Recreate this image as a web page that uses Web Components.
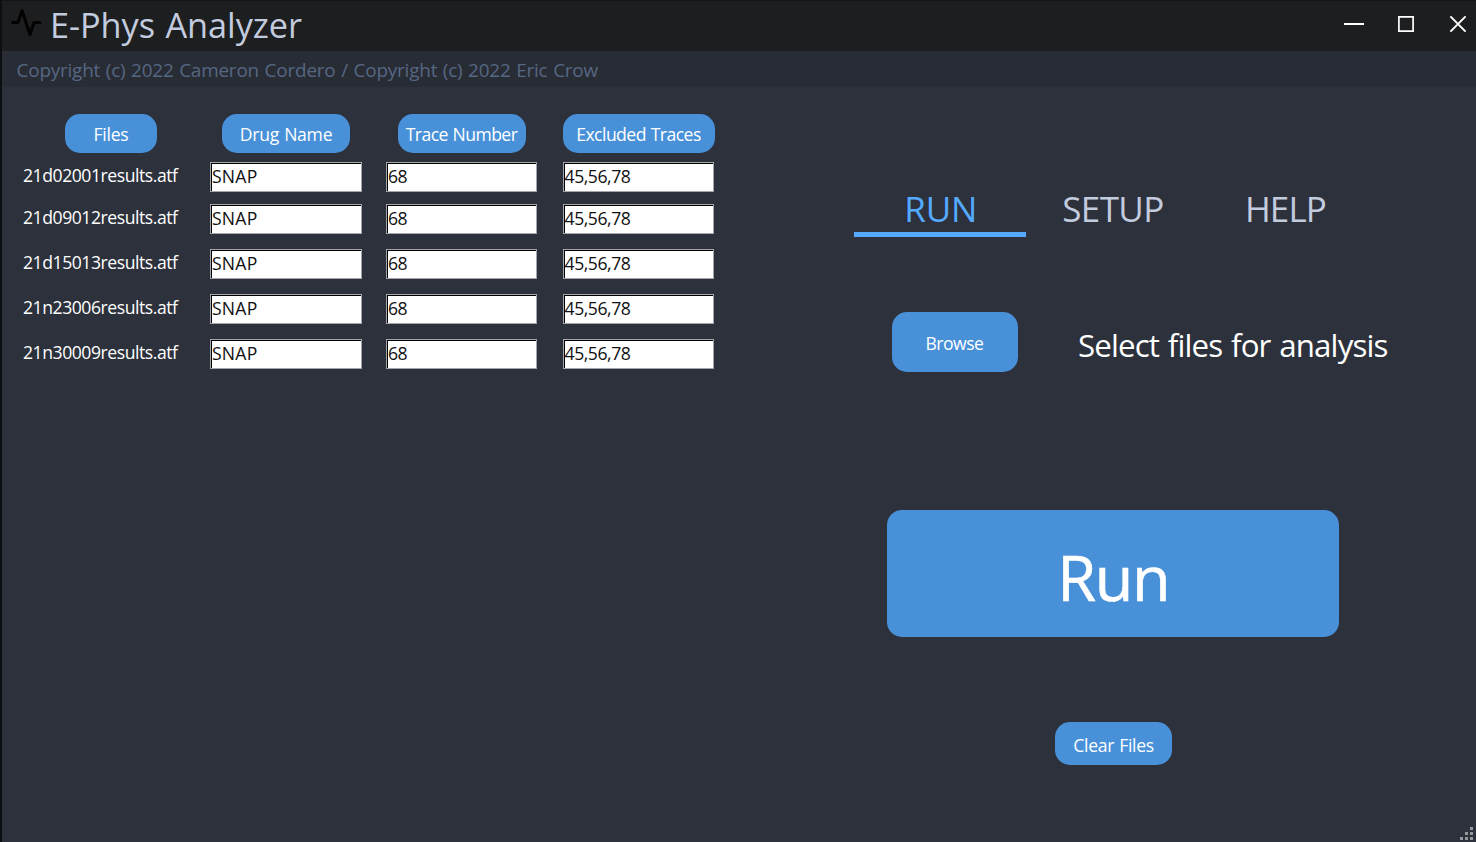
<!DOCTYPE html>
<html lang="en">
<head>
<meta charset="utf-8">
<title>E-Phys Analyzer</title>
<style>
html,body{margin:0;height:100%;overflow:hidden;background:#2c313c}
body{font-family:"Open Sans","Noto Sans",sans-serif;color:#fff}
</style>
</head>
<body>
<ephys-app></ephys-app>
<script>
const define=(name,html,init)=>customElements.define(name,class extends HTMLElement{
  connectedCallback(){
    if(this.shadowRoot)return;
    const t=document.createElement('template');
    t.innerHTML=html;
    this.attachShadow({mode:'open'}).append(t.content.cloneNode(true));
    if(init)init(this,this.shadowRoot);
  }
});

/* A single line of text tracked to a given width. */
define('fit-text',`<style>
:host{display:block;white-space:nowrap;flex:none}
span{display:inline-block;word-spacing:.05em}
</style><span><slot></slot></span>`,(el,root)=>{
  const s=root.querySelector('span'),w=parseFloat(el.getAttribute('w'));
  const n=el.textContent.length;
  s.style.fontSize=el.getAttribute('size')+'px';
  s.style.lineHeight=el.getAttribute('lh')+'px';
  s.style.fontKerning='normal';
  s.style.fontVariantLigatures='none';
  el.style.width=w+'px';
  el.style.height=el.getAttribute('lh')+'px';
  s.style.letterSpacing=((w-s.getBoundingClientRect().width)/n)+'px';
});

define('pill-button',`<style>
:host{display:block;flex:none}
button{all:unset;box-sizing:border-box;display:flex;justify-content:center;align-items:center;width:100%;height:100%;
padding-top:var(--drop,2px);border-radius:15px;background:#4891d9;color:#fff}
</style><button><slot></slot></button>`);

define('text-field',`<style>
:host{display:block;height:30px;box-sizing:border-box;border:1px solid #a5a6ab;background:#fff;color:#101010}
div{height:28px;box-sizing:border-box;border-top:1px solid #000;border-left:1px solid #000}
</style><div><slot></slot></div>`);

define('title-bar',`<style>
:host{display:flex;box-sizing:border-box;height:51px;background:#1d1e20;border-top:1px solid #131417;color:#c3ccdf}
.pulse{width:32px;height:30px;margin:7px 0 0 8px}
fit-text{margin:0 0 0 8px}
nav{margin-left:auto;display:flex;gap:32px;padding:14px 9px 0 0}
nav svg{width:20px;height:18px}
</style>
<svg class="pulse" viewBox="0 0 32 30" fill="none" stroke="#020203" stroke-width="3" stroke-linecap="round" stroke-linejoin="round"><path d="M2.5 14.5H8L12 2.5L20 26.5L24 14.5H30"/></svg>
<fit-text w="252" size="34.3" lh="48">E-Phys Analyzer</fit-text>
<nav>
<svg viewBox="0 0 20 18" fill="none" stroke="#fff"><path d="M0 9H20" stroke-width="2"/></svg>
<svg viewBox="0 0 20 18" fill="none" stroke="#fff" stroke-width="1.7"><path d="M2.9 1.9H17.1V16.1H2.9Z"/></svg>
<svg viewBox="0 0 20 18" fill="none" stroke="#fff" stroke-width="2" style="margin-right:-1px"><path d="M2.4 1.4L17.6 16.6M17.6 1.4L2.4 16.6"/></svg>
</nav>`);

define('credit-bar',`<style>
:host{display:block;height:36px;background:#282c34;color:#566783}
</style><fit-text style="margin-left:14.5px" w="581.5" size="18.9" lh="38">Copyright (c) 2022 Cameron Cordero / Copyright (c) 2022 Eric Crow</fit-text>`);

define('file-table',`<style>
:host{display:block;width:740px;padding:27px 0 0 10px;box-sizing:border-box}
.row{display:grid;grid-template-columns:198px 152px 151px 151px;column-gap:0}
.row>:nth-child(3){margin-left:24px;margin-right:-24px}
.row>:nth-child(4){margin-left:50px;margin-right:-50px}
.head{height:39px;margin-bottom:9px;justify-items:center;--drop:0px}
.head pill-button{height:39px}
.data{height:45px}
.data:nth-of-type(2){height:42px}
.name{margin-left:11px;margin-top:-1px}
</style>
<div class="row head">
<pill-button style="width:92px"><fit-text w="35" size="17.6" lh="26">Files</fit-text></pill-button>
<pill-button style="width:128px"><fit-text w="92.5" size="17.6" lh="26">Drug Name</fit-text></pill-button>
<pill-button style="width:128px"><fit-text w="111.5" size="17.6" lh="26">Trace Number</fit-text></pill-button>
<pill-button style="width:152px"><fit-text w="124.5" size="17.6" lh="26">Excluded Traces</fit-text></pill-button>
</div>
${['21d02001','21d09012','21d15013','21n23006','21n30009'].map(f=>`<div class="row data">
<fit-text class="name" w="154.5" size="17.6" lh="28">${f}results.atf</fit-text>
<text-field><fit-text w="45.5" size="17.6" lh="25">SNAP</fit-text></text-field>
<text-field><fit-text w="19" size="17.6" lh="25">68</fit-text></text-field>
<text-field><fit-text w="66" size="17.6" lh="25" style="margin-left:-.5px">45,56,78</fit-text></text-field>
</div>`).join('')}`);

define('tab-item',`<style>
:host{display:flex;justify-content:center;box-sizing:border-box;width:172.5px;height:55px;color:#c3ccdf}
:host([active]){width:172px;color:#55aaff;border-bottom:5px solid #55aaff}
</style><slot></slot>`);

define('run-panel',`<style>
:host{display:flex;flex-direction:column;width:518px;margin-left:112px;padding-top:95px;box-sizing:border-box}
.tabs{display:flex}
.tabs fit-text{margin-left:1.4px}
.browse{display:flex;margin:75px 0 0 37.5px;height:60px}
.browse pill-button{width:126px;height:60px;--drop:1px}
.browse>fit-text{margin:3px 0 0 60.5px}
.run{width:451.5px;height:127px;margin:138px 0 0 33px;--drop:6px}
.clear{width:117px;height:43.5px;margin:84.5px 0 0 201px;--drop:4px}
</style>
<div class="tabs">
<tab-item active><fit-text w="73" size="35" lh="54">RUN</fit-text></tab-item>
<tab-item><fit-text w="101.5" size="35" lh="54">SETUP</fit-text></tab-item>
<tab-item><fit-text w="81" size="35" lh="54">HELP</fit-text></tab-item>
</div>
<div class="browse"><pill-button><fit-text w="58" size="17.6" lh="26">Browse</fit-text></pill-button>
<fit-text w="309.5" size="31.3" lh="60">Select files for analysis</fit-text></div>
<pill-button class="run"><fit-text w="112" size="63" lh="90" style="margin-left:1px;-webkit-text-stroke:.6px #fff">Run</fit-text></pill-button>
<pill-button class="clear"><fit-text w="80.5" size="17.6" lh="26">Clear Files</fit-text></pill-button>`);

define('size-grip',`<style>
:host{display:block;position:absolute;right:0;bottom:0;width:18px;height:16px}
svg{display:block}
</style><svg width="18" height="16" fill="#96979c"><path d="M12 1h3v3h-3zM7 6h3v3H7zM12 6h3v3h-3zM2 11h3v3H2zM7 11h3v3H7zM12 11h3v3h-3z"/></svg>`);

define('ephys-app',`<style>
:host{display:block;position:relative;box-sizing:border-box;width:1476px;height:842px;background:#2c313c;border-left:2px solid #0d0e11}
main{display:flex}
</style><title-bar></title-bar><credit-bar></credit-bar><main><file-table></file-table><run-panel></run-panel></main><size-grip></size-grip>`);
</script>
</body>
</html>
